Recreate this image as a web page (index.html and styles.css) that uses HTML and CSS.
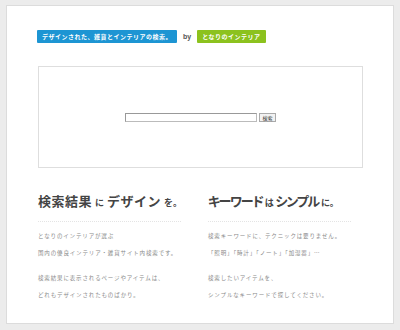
FILE: index.html
```html
<!DOCTYPE html>
<html lang="ja">
<head>
    <meta charset="UTF-8">
    <meta name="viewport" content="width=device-width, initial-scale=1.0">
    <title>となりのインテリア 検索</title>
    <link rel="stylesheet" href="styles.css">
</head>
<body>
    <div class="page">
        <div class="tags">
            <span class="tag blue">デザインされた、雑貨とインテリアの検索。</span>
            <span class="by">by</span>
            <span class="tag green">となりのインテリア</span>
        </div>

        <div class="search-box">
            <form class="search-form" onsubmit="return false;">
                <input type="text" class="search-input">
                <button type="submit" class="search-button">検索</button>
            </form>
        </div>

        <div class="columns">
            <div class="column">
                <h2><span class="big">検索結果</span><span class="small">に</span><span class="big">デザイン</span><span class="small">を。</span></h2>
                <p>となりのインテリアが選ぶ<br>国内の優良インテリア・雑貨サイト内検索です。</p>
                <p>検索結果に表示されるページやアイテムは、<br>どれもデザインされたものばかり。</p>
            </div>
            <div class="column">
                <h2 class="tight"><span class="big">キーワード</span><span class="small">は</span><span class="big">シンプル</span><span class="small">に。</span></h2>
                <p>検索キーワードに、テクニックは要りません。<br>「照明」「時計」「ノート」「加湿器」…</p>
                <p>検索したいアイテムを、<br>シンプルなキーワードで探してください。</p>
            </div>
        </div>
    </div>
</body>
</html>
```

FILE: styles.css
```css
body {
    margin: 0;
    padding: 5px 6px 6px;
    background: #ececec;
    font-family: "Noto Sans CJK JP", "Noto Sans", sans-serif;
}
.page {
    background: white;
    border: 1px solid #dcdcdc;
    height: 319px;
    box-sizing: border-box;
    padding: 24px 30px 0 30px;
}
.tags {
    display: flex;
    align-items: center;
    height: 13px;
}
.tag {
    color: white;
    font-size: 6px;
    font-weight: bold;
    letter-spacing: 0.5px;
    line-height: 13px;
    height: 13px;
    padding: 0 5px;
    border-radius: 1px;
}
.blue { background: #1d95d3; }
.green { background: #8cc21e; }
.by {
    font-family: "Liberation Sans", Arial, sans-serif;
    font-size: 7px;
    font-weight: bold;
    color: #555;
    margin: 0 6px;
}
.search-box {
    margin: 23px 0 0 1px;
    height: 102px;
    border: 1px solid #dedede;
    box-sizing: border-box;
    display: flex;
    align-items: center;
    justify-content: center;
}
.search-form {
    display: flex;
    align-items: center;
    gap: 2px;
}
.search-input {
    width: 132px;
    height: 9px;
    box-sizing: border-box;
    margin: 0;
    padding: 0;
    border: 1px solid #bbb;
    border-top-color: #999;
    border-left-color: #999;
    background: white;
}
.search-button {
    width: 17px;
    height: 9px;
    box-sizing: border-box;
    margin: 0;
    padding: 0;
    border: 1px solid #aaa;
    background: #f2f2f2;
    font-family: inherit;
    font-size: 5px;
    line-height: 7px;
    color: #333;
}
.columns {
    display: flex;
    margin-left: 1px;
    margin-top: 24px;
}
.column {
    flex: none;
    width: 170px;
}
.column h2 {
    margin: 0;
    height: 30px;
    box-sizing: border-box;
    padding-top: 1px;
    color: #444;
    font-weight: bold;
    font-size: 13px;
    line-height: 16px;
    border-bottom: 1px dotted #e4e4e4;
    width: 143px;
    white-space: nowrap;
}
.column h2 span {
    line-height: 16px;
    vertical-align: baseline;
}
.big {
    font-size: 13px;
    letter-spacing: 0.5px;
}
.small {
    font-size: 9px;
    margin: 0 3px;
}
.column h2.tight {
    font-feature-settings: "palt";
}
.tight .big {
    letter-spacing: -1.2px;
}
.tight .small {
    margin: 0 2px;
}
.column p {
    margin: 6px 0 0;
    font-size: 5.5px;
    letter-spacing: 0.85px;
    line-height: 17px;
    color: #8a8a8a;
}
.column p + p {
    margin-top: 8px;
}
```
